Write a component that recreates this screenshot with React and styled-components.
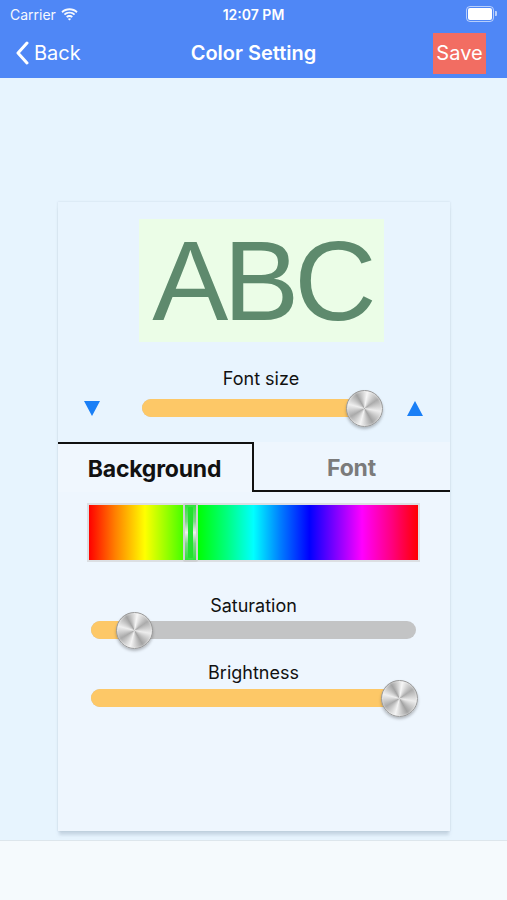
import React from 'react';
import styled, { createGlobalStyle } from 'styled-components';

const GlobalStyle = createGlobalStyle`
  html, body {
    margin: 0;
    padding: 0;
    background: #e7f4fe;
  }
  body {
    font-family: Inter, "Liberation Sans", sans-serif;
  }
`;

const Page = styled.div`
  width: 507px;
  height: 900px;
  display: flex;
  flex-direction: column;
  background: #e7f4fe;
  overflow: hidden;
`;

const Header = styled.div`
  background: #4f87f6;
  color: #fff;
  height: 79px;
  display: flex;
  flex-direction: column;
`;

const StatusBar = styled.div`
  height: 28px;
  display: grid;
  grid-template-columns: 1fr auto 1fr;
  align-items: center;
  padding: 0 10px;
  font-size: 14px;
`;

const Carrier = styled.div`
  display: flex;
  align-items: center;
  gap: 5px;
  font-weight: 400;
  opacity: 0.95;
`;

const Clock = styled.div`
  font-weight: 600;
`;

const Battery = styled.div`
  justify-self: end;
  width: 24px;
  height: 12px;
  border: 1px solid rgba(255, 255, 255, 0.6);
  border-radius: 4px;
  padding: 1px;
  position: relative;
  margin-right: 3px;
  &::before {
    content: '';
    display: block;
    height: 100%;
    background: #fff;
    border-radius: 2px;
  }
  &::after {
    content: '';
    position: absolute;
    right: -4px;
    top: 4px;
    width: 2px;
    height: 5px;
    background: rgba(255, 255, 255, 0.6);
    border-radius: 0 1px 1px 0;
  }
`;

const NavBar = styled.div`
  flex: 1;
  display: grid;
  grid-template-columns: 1fr auto 1fr;
  align-items: center;
  padding: 0 21px;
`;

const BackButton = styled.div`
  display: flex;
  align-items: center;
  gap: 5px;
  font-size: 20px;
  margin-left: -6px;
`;

const Title = styled.div`
  font-size: 20px;
  font-weight: 600;
`;

const SaveButton = styled.div`
  justify-self: end;
  background: #f26d62;
  width: 53px;
  height: 41px;
  display: flex;
  align-items: center;
  justify-content: center;
  font-size: 20px;
`;

const Main = styled.div`
  flex: 1;
  padding-top: 124px;
  display: flex;
  flex-direction: column;
  align-items: center;
`;

const Card = styled.div`
  width: 392px;
  height: 629px;
  display: flex;
  flex-direction: column;
  background: #e8f4fe;
  box-shadow: 0 0 2px rgba(120, 140, 160, 0.25), 0 5px 3px -1px rgba(140, 160, 180, 0.35);
`;

const Preview = styled.div`
  margin: 17px 0 0 81px;
  width: 245px;
  height: 123px;
  background: #ebfde7;
  display: flex;
  align-items: center;
  justify-content: center;
  color: #5e8a6d;
  font-family: "Liberation Sans", Arial, sans-serif;
  font-size: 114px;
  line-height: 114px;
  letter-spacing: -5px;
  padding: 0 0 0 2px;
  box-sizing: border-box;
`;

const Label = styled.div`
  text-align: center;
  font-size: 18px;
  color: #111;
  line-height: 22px;
  margin-top: ${(p) => p.$top || 0}px;
  padding-left: ${(p) => p.$shift || 0}px;
`;

const SizeRow = styled.div`
  display: flex;
  align-items: center;
  height: 36px;
  padding: 0 0 0 26px;
`;

const Arrow = styled.div`
  width: 0;
  height: 0;
  border-left: 8px solid transparent;
  border-right: 8px solid transparent;
  ${(p) =>
    p.$up
      ? 'border-bottom: 15px solid #1a7ff6;'
      : 'border-top: 15px solid #1a7ff6;'}
`;

const Track = styled.div`
  position: relative;
  width: ${(p) => p.$width}px;
  height: 18px;
  border-radius: 9px;
  background: #c3c4c5;
  margin-top: ${(p) => p.$top || 0}px;
  margin-left: ${(p) => p.$left || 0}px;
  margin-right: ${(p) => p.$right || 0}px;
`;

const Fill = styled.div`
  height: 100%;
  border-radius: 9px;
  background: #fdc867;
`;

const Thumb = styled.div`
  position: absolute;
  top: 50%;
  width: 37px;
  height: 37px;
  margin: -18px 0 0 -18px;
  border-radius: 50%;
  box-sizing: border-box;
  border: 1px solid #9a9a9a;
  background: conic-gradient(
    from 10deg,
    #f6f6f6,
    #ababab 45deg,
    #ededed 90deg,
    #a2a2a2 140deg,
    #f4f4f4 185deg,
    #aaaaaa 230deg,
    #efefef 275deg,
    #a3a3a3 320deg,
    #f6f6f6
  );
  box-shadow: 0 2px 3px rgba(0, 0, 0, 0.25), inset 0 0 2px rgba(255, 255, 255, 0.8);
`;

const TabArea = styled.div`
  margin-top: 16px;
  flex: 1;
  display: flex;
  flex-direction: column;
  background: #eef6fe;
`;

const Tabs = styled.div`
  display: grid;
  grid-template-columns: 196px 1fr;
  height: 50px;
`;

const Tab = styled.div`
  display: flex;
  align-items: center;
  justify-content: center;
  font-size: 23px;
  font-weight: 700;
  letter-spacing: -0.2px;
  color: ${(p) => (p.$active ? '#111' : '#7b7b7b')};
  background: ${(p) => (p.$active ? '#f0f7fe' : 'transparent')};
  box-sizing: border-box;
  border-top: ${(p) => (p.$active ? '2px solid #111' : 'none')};
  border-right: ${(p) => (p.$active ? '2px solid #111' : 'none')};
  border-bottom: ${(p) => (p.$active ? 'none' : '2px solid #111')};
  padding-top: ${(p) => (p.$active ? 1 : 3)}px;
`;

const HueBar = styled.div`
  position: relative;
  margin: 11px 30px 0 29px;
  height: 59px;
  box-sizing: border-box;
  border: 2px solid #dcdfe3;
  background: linear-gradient(
    to right,
    #ff0000 0%,
    #ff8000 8%,
    #ffff00 17%,
    #80ff00 25%,
    #00ff00 33%,
    #00ff80 42%,
    #00ffff 50%,
    #0080ff 58%,
    #0000ff 67%,
    #8000ff 75%,
    #ff00ff 83%,
    #ff0080 92%,
    #ff0000 100%
  );
  background-clip: content-box;
`;

const HueMarker = styled.div`
  position: absolute;
  top: -2px;
  bottom: -2px;
  width: 15px;
  margin-left: -7px;
  box-sizing: border-box;
  border: 2px solid #cfd1d3;
  border-radius: 2px;
  background: linear-gradient(
    to bottom,
    #2ee53a 0%,
    #7ed887 30%,
    #f0f0f0 50%,
    #7ed887 70%,
    #2ee53a 100%
  );
  &::after {
    content: '';
    position: absolute;
    left: 3px;
    right: 3px;
    top: 2px;
    bottom: 2px;
    background: #22e22e;
    border-radius: 1px;
  }
`;

const Footer = styled.div`
  align-self: stretch;
  height: 59px;
  margin-top: 9px;
  background: #f5fafd;
  border-top: 1px solid #dde6ec;
`;

const WifiIcon = () => (
  <svg width="17" height="13" viewBox="0 0 17 13">
    <path d="M8.5 2.2c2.6 0 5 1 6.8 2.7l1.3-1.4C14.5 1.5 11.6.3 8.5.3S2.5 1.5.4 3.5l1.3 1.4C3.5 3.2 5.9 2.2 8.5 2.2z" fill="#fff" />
    <path d="M8.5 5.6c1.7 0 3.2.6 4.4 1.7l1.3-1.4C12.7 4.5 10.7 3.7 8.5 3.7S4.3 4.5 2.8 5.9l1.3 1.4c1.2-1.1 2.7-1.7 4.4-1.7z" fill="#fff" />
    <path d="M8.5 9c.8 0 1.5.3 2.1.8l1.3-1.4C11 7.6 9.8 7.1 8.5 7.1S6 7.6 5.1 8.4l1.3 1.4C7 9.3 7.7 9 8.5 9z" fill="#fff" />
    <path d="M8.5 12.6l1.6-1.7c-.4-.4-1-.6-1.6-.6s-1.2.2-1.6.6z" fill="#fff" />
  </svg>
);

const Chevron = () => (
  <svg width="14" height="24" viewBox="0 0 14 24">
    <path d="M12 2L3 12l9 10" stroke="#fff" strokeWidth="3" fill="none" strokeLinecap="round" strokeLinejoin="round" />
  </svg>
);

const Slider = ({ width, value, left, right, top }) => (
  <Track $width={width} $left={left} $right={right} $top={top}>
    <Fill style={{ width: `${Math.max(value * 100, 8)}%` }} />
    <Thumb style={{ left: `${value * 100}%` }} />
  </Track>
);

export default function App() {
  return (
    <Page>
      <GlobalStyle />
      <Header>
        <StatusBar>
          <Carrier>
            Carrier <WifiIcon />
          </Carrier>
          <Clock>12:07 PM</Clock>
          <Battery />
        </StatusBar>
        <NavBar>
          <BackButton>
            <Chevron />
            Back
          </BackButton>
          <Title>Color Setting</Title>
          <SaveButton>Save</SaveButton>
        </NavBar>
      </Header>
      <Main>
        <Card>
          <Preview>ABC</Preview>
          <Label $top={26} $shift={15}>Font size</Label>
          <SizeRow>
            <Arrow />
            <Slider width={240} value={0.925} left={42} right={25} />
            <Arrow $up />
          </SizeRow>
          <TabArea>
            <Tabs>
              <Tab $active>Background</Tab>
              <Tab>Font</Tab>
            </Tabs>
            <HueBar>
              <HueMarker style={{ left: '31%' }} />
            </HueBar>
            <Label $top={33}>Saturation</Label>
            <Slider width={325} value={0.135} left={33} top={4} />
            <Label $top={23}>Brightness</Label>
            <Slider width={325} value={0.95} left={33} top={5} />
          </TabArea>
        </Card>
        <Footer />
      </Main>
    </Page>
  );
}
